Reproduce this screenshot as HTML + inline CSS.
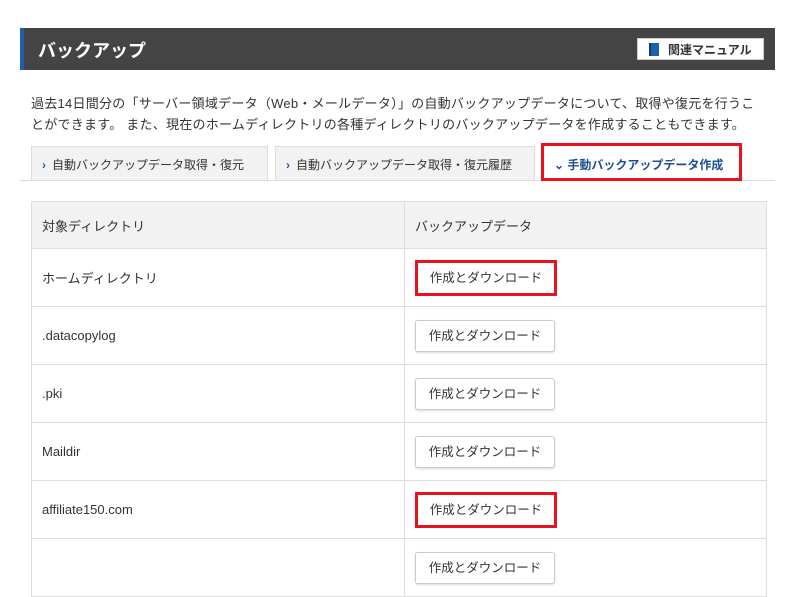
<!DOCTYPE html>
<html><head><meta charset="utf-8"><style>
*{margin:0;padding:0;box-sizing:border-box}
body{width:800px;height:553px;overflow:hidden;background:#fff;font-family:"Liberation Sans","Noto Sans CJK JP",sans-serif;color:#333;position:relative}
.hd{position:absolute;left:20px;top:28px;width:755px;height:42px;background:#444;border-left:4px solid #1e5fae}
.hd h1{position:absolute;left:14px;top:9px;color:#fff;font-size:18px;font-weight:bold}
.man{position:absolute;left:613px;top:10px;width:127px;height:22px;background:#fff;border:1px solid #ccc;font-size:12px;font-weight:bold;color:#333;padding:2px 0 0 30px}
.man i{position:absolute;left:11px;top:4px;width:10px;height:13px;background:#1e5fae;border-left:2px solid #0b3a75}
p.d{position:absolute;left:31px;top:93px;font-size:13px;line-height:21px;width:740px;letter-spacing:0.25px}
.tab{position:absolute;top:146px;height:34px;background:#f2f2f2;border:1px solid #ddd;border-bottom:none;font-size:12px;padding:9px 0 0 10px}
.tab b{color:#1e5fae;margin-right:6px}
.t3{position:absolute;left:541px;top:143px;width:201px;height:38px;border:3px solid #e8121e;background:#fff;font-size:12px;font-weight:bold;color:#1e4f92;padding:10px 0 0 10px}
.line{position:absolute;left:20px;top:180px;width:755px;height:1px;background:#ddd}
table{position:absolute;left:31px;top:201px;width:736px;border-collapse:collapse;font-size:13px}
td,th{border:1px solid #ddd;text-align:left;font-weight:normal;padding:0 0 0 10px;height:58px}
th{background:#f2f2f2;height:47px}
td:first-child,th:first-child{width:373px}
.b{display:inline-block;width:140px;height:32px;border:1px solid #ccc;border-radius:3px;box-shadow:0 1px 2px rgba(0,0,0,.15);background:#fff;font-size:12.5px;text-align:center;line-height:30px;color:#333}
.r{border:3px solid #e8121e;border-radius:0;box-shadow:none;height:36px;width:142px;line-height:30px}
</style></head><body>
<div class="hd"><h1>バックアップ</h1><div class="man"><i></i>関連マニュアル</div></div>
<p class="d">過去14日間分の「サーバー領域データ（Web・メールデータ）」の自動バックアップデータについて、取得や復元を行うこ<br>とができます。 また、現在のホームディレクトリの各種ディレクトリのバックアップデータを作成することもできます。</p>
<div class="tab" style="left:31px;width:237px"><b>›</b>自動バックアップデータ取得・復元</div>
<div class="tab" style="left:275px;width:260px"><b>›</b>自動バックアップデータ取得・復元履歴</div>
<div class="line"></div>
<div class="t3">⌄ 手動バックアップデータ作成</div>
<table>
<tr><th>対象ディレクトリ</th><th>バックアップデータ</th></tr>
<tr><td>ホームディレクトリ</td><td><span class="b r">作成とダウンロード</span></td></tr>
<tr><td>.datacopylog</td><td><span class="b">作成とダウンロード</span></td></tr>
<tr><td>.pki</td><td><span class="b">作成とダウンロード</span></td></tr>
<tr><td>Maildir</td><td><span class="b">作成とダウンロード</span></td></tr>
<tr><td>affiliate150.com</td><td><span class="b r">作成とダウンロード</span></td></tr>
<tr><td></td><td><span class="b">作成とダウンロード</span></td></tr>
</table>
</body></html>
